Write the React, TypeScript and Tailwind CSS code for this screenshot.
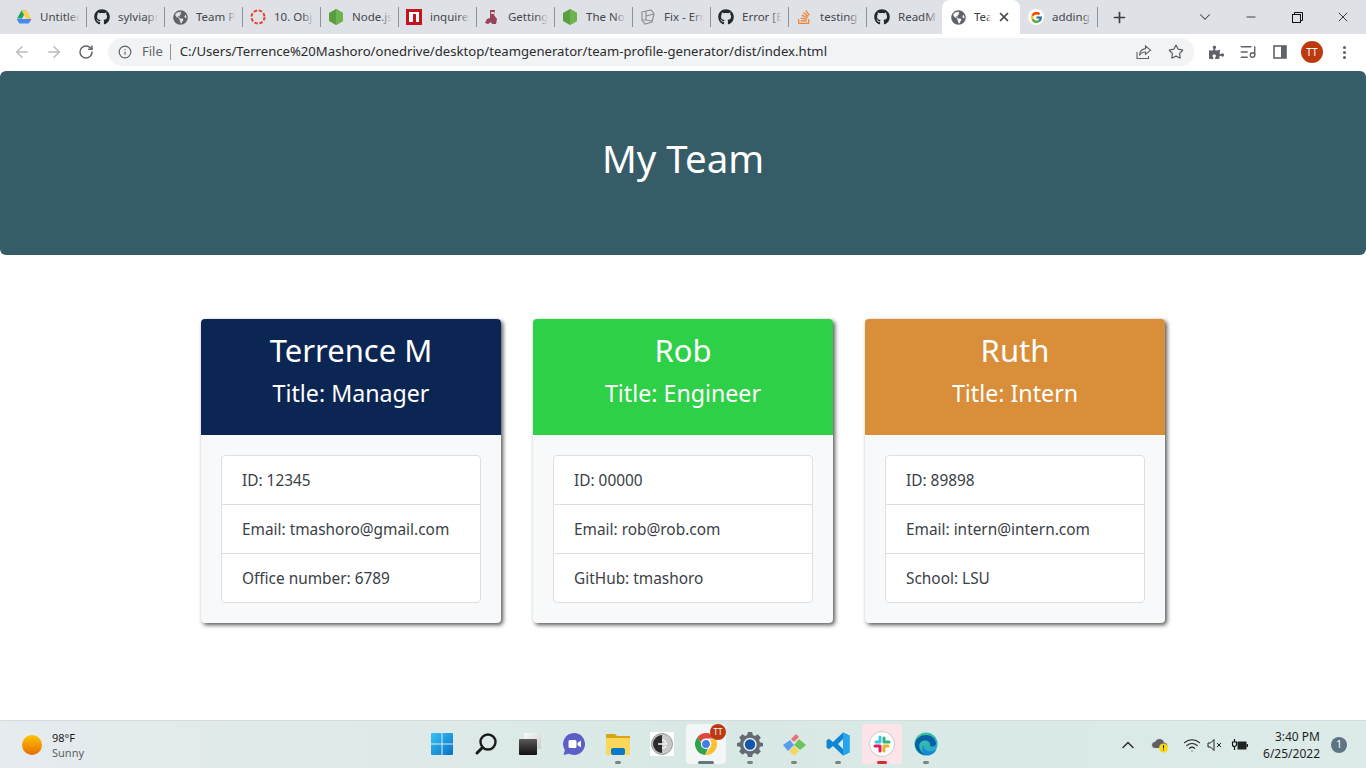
import React from 'react';
import { ArrowLeft, ArrowRight, RotateCw, Info, Star, ListMusic, EllipsisVertical, Plus, X, ChevronDown, Minus, ChevronUp, Wifi } from 'lucide-react';
import { FaGithub, FaGlobeAmericas, FaPuzzlePiece, FaStackOverflow } from 'react-icons/fa';
import { FcGoogle } from 'react-icons/fc';

const NodeHex = () => (
  <svg width="16" height="16" viewBox="0 0 16 16">
    <polygon points="8,0 15,4 15,12 8,16 1,12 1,4" fill="#5a9e3f" />
    <polygon points="8,0 15,4 15,12 8,16" fill="#6fb54f" />
  </svg>
);

const DriveIcon = () => (
  <svg width="16" height="16" viewBox="0 0 16 16">
    <polygon points="5.5,1.5 10.5,1.5 6,9.5 1,9.5" fill="#1fa463" />
    <polygon points="10.5,1.5 15.5,10 10.5,10 5.5,1.5" fill="#ffd04b" />
    <polygon points="3.3,14.5 0.6,10 15.5,10 12.8,14.5" fill="#4687f4" />
  </svg>
);

const tabs: { label: string; icon: React.ReactNode; width: number }[] = [
  { label: 'Untitled', icon: <DriveIcon />, width: 78 },
  { label: 'sylviapr', icon: <FaGithub size={16} color="#24292e" />, width: 78 },
  { label: 'Team P', icon: <FaGlobeAmericas size={15} color="#5f6368" />, width: 78 },
  {
    label: '10. Obj',
    icon: (
      <svg width="16" height="16" viewBox="0 0 16 16">
        <circle cx="8" cy="8" r="6.5" fill="none" stroke="#e8412f" strokeWidth="2" strokeDasharray="3.4 1.7" />
      </svg>
    ),
    width: 78,
  },
  { label: 'Node.js', icon: <NodeHex />, width: 78 },
  {
    label: 'inquirer',
    icon: (
      <svg width="16" height="16" viewBox="0 0 16 16">
        <rect width="16" height="16" fill="#c5141c" />
        <rect x="3" y="3" width="10" height="10" fill="#fff" />
        <rect x="7" y="5" width="3" height="8" fill="#c5141c" />
      </svg>
    ),
    width: 78,
  },
  {
    label: 'Getting',
    icon: (
      <svg width="16" height="16" viewBox="0 0 16 16">
        <path d="M6 1h5l-1 5 3 4-1 5H8l-1-2-3 2-3-1 2-4 3-1z" fill="#99425b" />
        <rect x="7" y="3" width="3" height="2" fill="#e8c7d0" />
      </svg>
    ),
    width: 78,
  },
  { label: 'The No', icon: <NodeHex />, width: 78 },
  {
    label: 'Fix - Err',
    icon: (
      <svg width="16" height="16" viewBox="0 0 16 16" fill="none" stroke="#8d9094" strokeWidth="1.2">
        <path d="M2 3l9-2 3 4-2 8-7 2-3-4z" />
        <path d="M6 2v9l6 1M2 11l4 0M6 7l8-2" />
      </svg>
    ),
    width: 78,
  },
  { label: 'Error [E', icon: <FaGithub size={16} color="#24292e" />, width: 78 },
  { label: 'testing', icon: <FaStackOverflow size={16} color="#ef8236" />, width: 78 },
  { label: 'ReadM', icon: <FaGithub size={16} color="#24292e" />, width: 76 },
];

function Tab({ label, icon, width }: { label: string; icon: React.ReactNode; width: number }) {
  return (
    <div className="flex h-[34px] shrink-0 items-center pl-2" style={{ width }}>
      <div className="flex h-4 w-4 shrink-0 items-center justify-center">{icon}</div>
      <div className="relative ml-2 w-[40px] overflow-hidden whitespace-nowrap text-[11.5px] text-[#45474a]">
        {label}
        <div className="absolute inset-y-0 right-0 w-3 bg-gradient-to-r from-transparent to-[#dee1e6]" />
      </div>
      <div className="ml-auto mr-[-1px] h-5 w-px bg-[#8f9296]" />
    </div>
  );
}

function Card({ name, title, color, rows }: { name: string; title: string; color: string; rows: string[] }) {
  return (
    <div className="w-[300px] overflow-hidden rounded bg-[#f8f9fa] shadow-[2px_2px_4px_#555]">
      <div className="h-[116px] pt-3 text-center text-white" style={{ backgroundColor: color }}>
        <h2 className="mb-[10px] text-[31px] leading-[38px]">{name}</h2>
        <h4 className="text-[23.2px] leading-[29px]">{title}</h4>
      </div>
      <div className="p-5">
        <ul className="rounded border border-[#dfdfdf] bg-white">
          {rows.map((row, i) => (
            <li key={row} className={`h-[48px] px-5 pt-[13px] text-[15.4px] leading-6 text-[#3a4046] ${i > 0 ? 'h-[49px] border-t border-[#dfdfdf]' : ''}`}>
              {row}
            </li>
          ))}
        </ul>
      </div>
    </div>
  );
}

const TaskSlot = ({ children, dot, className = '' }: { children: React.ReactNode; dot?: string; className?: string }) => (
  <div className={`relative flex h-10 w-[40px] items-center justify-center rounded mx-0.5 ${className}`}>
    {children}
    {dot && <div className={`absolute bottom-0 h-[3px] rounded-full ${dot}`} />}
  </div>
);

export default function App() {
  return (
    <div className="flex h-[768px] w-[1366px] flex-col overflow-hidden bg-white font-['Noto_Sans',sans-serif]">
      {/* tab strip */}
      <div className="flex h-[34px] shrink-0 items-center bg-[#dee1e6] pl-2">
        {tabs.map((t) => (
          <Tab key={t.label} {...t} />
        ))}
        <div className="flex h-[34px] w-[78px] shrink-0 items-center rounded-t-lg bg-white pl-[9px]">
          <FaGlobeAmericas size={15} color="#5f6368" />
          <div className="relative ml-2 w-[17px] overflow-hidden whitespace-nowrap text-[11.5px] text-[#3c4043]">
            Tea
            <div className="absolute inset-y-0 right-0 w-1 bg-gradient-to-r from-transparent to-white" />
          </div>
          <X size={14} strokeWidth={3} color="#45474a" className="ml-[6px]" />
        </div>
        <div className="flex h-[34px] w-[78px] shrink-0 items-center pl-2">
          <div className="flex h-4 w-4 items-center justify-center rounded-full bg-white">
            <FcGoogle size={13} />
          </div>
          <div className="relative ml-2 w-[39px] overflow-hidden whitespace-nowrap text-[11.5px] text-[#45474a]">
            adding
            <div className="absolute inset-y-0 right-0 w-2 bg-gradient-to-r from-transparent to-[#dee1e6]" />
          </div>
          <div className="ml-auto h-5 w-px bg-[#8f9296]" />
        </div>
        <Plus size={17} strokeWidth={2.4} color="#3c4043" className="ml-[13px]" />
        <ChevronDown size={18} strokeWidth={1.4} color="#3c4043" className="ml-[68px]" />
        <Minus size={14} strokeWidth={1.3} color="#111" className="ml-[30px]" />
        <svg width="11" height="11" viewBox="0 0 11 11" fill="none" stroke="#111" className="ml-[34px]">
          <rect x="0.5" y="2.5" width="8" height="8" />
          <path d="M2.5 2.5v-2h8v8h-2" />
        </svg>
        <X size={16} strokeWidth={1.2} color="#111" className="ml-[32px]" />
      </div>

      {/* toolbar */}
      <div className="flex h-[37px] shrink-0 items-center bg-white pb-px">
        <ArrowLeft size={18} color="#b9bbbe" strokeWidth={2} className="ml-[13px]" />
        <ArrowRight size={18} color="#b9bbbe" strokeWidth={2} className="ml-[14px]" />
        <RotateCw size={16} color="#5f6368" strokeWidth={2.2} className="ml-[15px]" />
        <div className="ml-[14px] flex h-7 w-[1086px] items-center rounded-full bg-[#f1f3f4]">
          <Info size={14} color="#5f6368" strokeWidth={2} className="ml-[10px]" />
          <span className="ml-[10px] text-[13px] text-[#5f6368]">File</span>
          <div className="ml-[7px] h-4 w-px bg-[#8f9296]" />
          <span className="ml-[9px] text-[13.14px] text-[#2b2c2f]">
            C:/Users/Terrence%20Mashoro/onedrive/desktop/teamgenerator/team-profile-generator/dist/index.html
          </span>
          <svg width="16" height="16" viewBox="0 0 16 16" fill="none" stroke="#5f6368" strokeWidth="1.1" className="ml-auto">
            <path d="M1 8v6.5h11.5V12" />
            <path d="M9.5 2l5 4.2-5 4.2V8C6.5 8 4.5 9.3 3.5 11.5 3.6 7.5 6 5 9.5 4.6z" />
          </svg>
          <Star size={16} color="#5f6368" strokeWidth={1.8} className="ml-4 mr-[10px]" />
        </div>
        <FaPuzzlePiece size={15} color="#5f6368" className="ml-[15px]" />
        <ListMusic size={18} color="#5f6368" strokeWidth={1.8} className="ml-[15px]" />
        <svg width="14" height="14" viewBox="0 0 14 14" className="ml-[16px]">
          <rect x="1" y="1" width="12" height="12" fill="none" stroke="#5f6368" strokeWidth="1.6" />
          <rect x="8" y="1" width="5" height="12" fill="#5f6368" />
        </svg>
        <div className="ml-[14px] flex h-[22px] w-[22px] items-center justify-center rounded-full bg-[#bb3a10] text-[10px] text-white">TT</div>
        <EllipsisVertical size={17} color="#5f6368" strokeWidth={2.4} className="ml-[13px]" />
      </div>

      {/* page */}
      <div className="flex-1">
        <div className="flex h-[184px] items-center justify-center rounded-md bg-[#365c68] pb-2">
          <h1 className="text-[38.4px] text-white">My Team</h1>
        </div>
        <div className="mt-16 flex justify-center gap-8">
          <Card name="Terrence M" title="Title: Manager" color="#0b2653" rows={['ID: 12345', 'Email: tmashoro@gmail.com', 'Office number: 6789']} />
          <Card name="Rob" title="Title: Engineer" color="#2ed047" rows={['ID: 00000', 'Email: rob@rob.com', 'GitHub: tmashoro']} />
          <Card name="Ruth" title="Title: Intern" color="#d98e3a" rows={['ID: 89898', 'Email: intern@intern.com', 'School: LSU']} />
        </div>
      </div>

      {/* taskbar */}
      <div className="relative flex h-[48px] shrink-0 items-center justify-between border-t border-[#d5dcdc] bg-gradient-to-r from-[#e6ebee] via-[#d8e9e5] to-[#dcebe8]">
        <div className="flex items-center pl-[22px]">
          <div className="h-5 w-5 rounded-full bg-gradient-to-b from-[#fdc400] to-[#e66a00]" />
          <div className="ml-[10px] text-[11px] leading-[15px]">
            <div className="text-[#1a1a1a]">98°F</div>
            <div className="text-[#5b5f62]">Sunny</div>
          </div>
        </div>

        <div className="absolute left-[420px] top-[3px] flex">
          <TaskSlot>
            <svg width="24" height="24" viewBox="0 0 24 24">
              <defs>
                <linearGradient id="win" x1="0" y1="0" x2="1" y2="1">
                  <stop offset="0" stopColor="#35c5f4" />
                  <stop offset="1" stopColor="#0a6fc8" />
                </linearGradient>
              </defs>
              <path d="M1 2a1 1 0 0 1 1-1h9.500v10.500H1zM12.500 1H22a1 1 0 0 1 1 1v9.500H12.500zM1 12.500h10.500V23H2a1 1 0 0 1-1-1zM12.500 12.500H23V22a1 1 0 0 1-1 1h-9.500z" fill="url(#win)" />
            </svg>
          </TaskSlot>
          <TaskSlot>
            <svg width="24" height="24" viewBox="0 0 24 24" fill="none" stroke="#1b1b1b" strokeLinecap="round">
              <circle cx="14" cy="10" r="7.500" strokeWidth="2.400" />
              <path d="M8.500 15.500L3 21" strokeWidth="3" />
            </svg>
          </TaskSlot>
          <TaskSlot>
            <svg width="24" height="24" viewBox="0 0 24 24">
              <defs>
                <linearGradient id="tv" x1="0" y1="0" x2="1" y2="1">
                  <stop offset="0" stopColor="#fafafa" />
                  <stop offset="1" stopColor="#c9cdcd" />
                </linearGradient>
                <linearGradient id="tvf" x1="0" y1="0" x2="0" y2="1">
                  <stop offset="0" stopColor="#5a5a5a" />
                  <stop offset="1" stopColor="#111" />
                </linearGradient>
              </defs>
              <rect x="6" y="1" width="17" height="16" rx="1" fill="url(#tv)" />
              <rect x="1" y="7" width="18" height="16" rx="1" fill="url(#tvf)" />
            </svg>
          </TaskSlot>
          <TaskSlot>
            <svg width="24" height="24" viewBox="0 0 24 24">
              <path d="M12 1a11 11 0 1 1-5 20.800L1.500 23l1.400-5A11 11 0 0 1 12 1z" fill="#5b5fc7" />
              <rect x="6.500" y="8" width="8" height="8" rx="1.500" fill="#fff" />
              <path d="M15.500 11l3.500-2.500v7L15.500 13z" fill="#fff" />
            </svg>
          </TaskSlot>
          <TaskSlot dot="w-[6px] bg-[#7d8488]">
            <svg width="24" height="24" viewBox="0 0 24 24">
              <path d="M0 2h9l2 2h13v5H0z" fill="#d9a514" />
              <rect y="6" width="24" height="17" rx="1" fill="#fbd75b" />
              <rect x="5" y="16" width="14" height="7" rx="2" fill="#0c78c9" />
            </svg>
          </TaskSlot>
          <TaskSlot>
            <svg width="24" height="24" viewBox="0 0 24 24">
              <rect width="24" height="24" fill="#fff" />
              <circle cx="12" cy="12" r="10.500" fill="#c8c8c8" stroke="#9a9a9a" />
              <path d="M12 3a9 9 0 0 0 0 18z" fill="#2c2c2c" />
              <path d="M8 12h9M12 8a4 4 0 0 1 4 4M12 16a4 4 0 0 0 4-2" fill="none" stroke="#f5f5f5" strokeWidth="1.600" />
            </svg>
          </TaskSlot>
          <TaskSlot dot="w-[16px] bg-[#67767d]" className="bg-[#f3f6f6]">
            <svg width="24" height="24" viewBox="0 0 24 24">
              <path d="M12 1a11 11 0 0 1 9.500 5.500H12a5.500 5.500 0 0 0-5.200 3.700L3.600 5A11 11 0 0 1 12 1z" fill="#e0483a" />
              <path d="M21.500 6.500A11 11 0 0 1 11 23l4.800-7.200A5.500 5.500 0 0 0 16 8z" fill="#fbc02d" />
              <path d="M3.600 5l4.600 8a5.500 5.500 0 0 0 6 3L11 23A11 11 0 0 1 3.600 5z" fill="#2fa24f" />
              <circle cx="12" cy="12" r="4.500" fill="#3f7fe8" stroke="#fff" strokeWidth="1.200" />
            </svg>
            <div className="absolute right-0 top-0 flex h-4 w-4 items-center justify-center rounded-full bg-[#bb3a10] text-[8px] text-white">TT</div>
          </TaskSlot>
          <TaskSlot dot="w-[6px] bg-[#7d8488]">
            <svg width="26" height="26" viewBox="0 0 24 24">
              <path d="M10 1h4l.6 2.800 2 .8L19 3l3 3-1.600 2.400.8 2L24 11v3l-2.800.6-.8 2L22 19l-3 3-2.400-1.600-2 .8L14 24h-4l-.6-2.800-2-.8L5 22l-3-3 1.600-2.400-.8-2L0 14v-3l2.800-.6.8-2L2 6l3-3 2.400 1.600 2-.8z" fill="#646b73" />
              <circle cx="12" cy="12.500" r="5.500" fill="#1257a8" stroke="#e6eef2" strokeWidth="1.400" />
            </svg>
          </TaskSlot>
          <TaskSlot dot="w-[6px] bg-[#7d8488]">
            <svg width="26" height="26" viewBox="0 0 26 26">
              <polygon points="9,9 2,14 7,20 13,14" fill="#5c9cf0" />
              <polygon points="10,8 15,3 18,6 13,11" fill="#e9717a" />
              <polygon points="13,14 18,8 25,14 19,19" fill="#6cc55a" />
              <polygon points="8,20 13,15 18,20 13,25" fill="#f4d85e" />
            </svg>
          </TaskSlot>
          <TaskSlot dot="w-[6px] bg-[#7d8488]">
            <svg width="24" height="24" viewBox="0 0 24 24">
              <path d="M17 0.500L23.500 3.500v17L17 23.500 7 14l-4 3.200L0.500 15.500V8.500L3 6.800 7 10zM17 7l-5 5 5 5z" fill="#0e86d4" fillRule="evenodd" />
              <path d="M17 0.500L23.500 3.500v17L17 23.500z" fill="#26a5ee" />
            </svg>
          </TaskSlot>
          <TaskSlot dot="w-[10px] bg-[#d32f2f]" className="bg-[#fce4e8]">
            <svg width="26" height="26" viewBox="0 0 26 26">
              <circle cx="13" cy="13" r="12.500" fill="#fff" stroke="#c8cccc" />
              <g strokeWidth="3" strokeLinecap="round">
                <path d="M11 6v5H7" stroke="#36c5f0" fill="none" strokeLinejoin="round" />
                <path d="M15 7v4h0M15 11h5" stroke="#2eb67d" />
                <path d="M15 20v-5h4" stroke="#ecb22e" fill="none" strokeLinejoin="round" />
                <path d="M11 15v5M6 15h5" stroke="#e01e5a" />
              </g>
            </svg>
          </TaskSlot>
          <TaskSlot dot="w-[6px] bg-[#7d8488]">
            <svg width="24" height="24" viewBox="0 0 24 24">
              <defs>
                <linearGradient id="edge" x1="0" y1="0" x2="1" y2="1">
                  <stop offset="0" stopColor="#3ecf8e" />
                  <stop offset="1" stopColor="#1fa1d8" />
                </linearGradient>
              </defs>
              <circle cx="12" cy="12" r="11.500" fill="url(#edge)" />
              <path d="M1 13C1 6 7 3 12 3c5 0 9 3 10 8 .4 3-3 4-6 3.500 1-3-1-6-5-6-5 0-7 5-5 9 1.500 3 5 5.500 9 5.200A11.500 11.500 0 0 1 1 13z" fill="#0b5fa8" />
              <path d="M14 23.500c4-.5 7-3 8.500-6-3 2-7 2.500-10 1-2-1-3.500-3-3-5.500-3 3-1 9 4.500 10.500z" fill="#1a86d8" />
            </svg>
          </TaskSlot>
        </div>

        <div className="flex items-center pr-[19px]">
          <ChevronUp size={20} strokeWidth={1.5} color="#222" />
          <svg width="18" height="16" viewBox="0 0 18 16" className="ml-[13px]">
            <path d="M4 11.500a3.500 3.500 0 0 1 0-7 5 5 0 0 1 9.500 1A3 3 0 0 1 14 11.500z" fill="#5c6064" stroke="#f2f2f2" strokeWidth="0.8" />
            <circle cx="12.500" cy="11" r="4.500" fill="#f9d90f" />
            <rect x="12" y="8" width="1" height="3.500" fill="#222" />
            <rect x="12" y="12.500" width="1" height="1" fill="#222" />
          </svg>
          <Wifi size={18} strokeWidth={1.5} color="#222" className="ml-[14px]" />
          <svg width="16" height="14" viewBox="0 0 16 14" fill="none" stroke="#222" className="ml-[6px]">
            <path d="M1 5h2.500L7 1.500v11L3.500 9H1z" />
            <path d="M10 5l4 4M14 5l-4 4" />
          </svg>
          <svg width="17" height="14" viewBox="0 0 17 14" className="ml-[8px]">
            <path d="M1 4h5M3.500 1v3M1.500 4v2.500a2 2 0 0 0 4 0V4M3.500 8.500V12" fill="none" stroke="#111" strokeWidth="1.200" />
            <rect x="6.500" y="3.500" width="9" height="8" fill="#222" />
            <rect x="15.500" y="6" width="1.500" height="3" fill="#222" />
          </svg>
          <div className="ml-[8px] w-[64px] text-right text-[12px] leading-[17px] text-[#1f1f1f]">
            <div>3:40 PM</div>
            <div>6/25/2022</div>
          </div>
          <div className="ml-[11px] flex h-4 w-4 items-center justify-center rounded-full bg-[#5e7485] text-[10px] text-white">1</div>
        </div>
      </div>
    </div>
  );
}
